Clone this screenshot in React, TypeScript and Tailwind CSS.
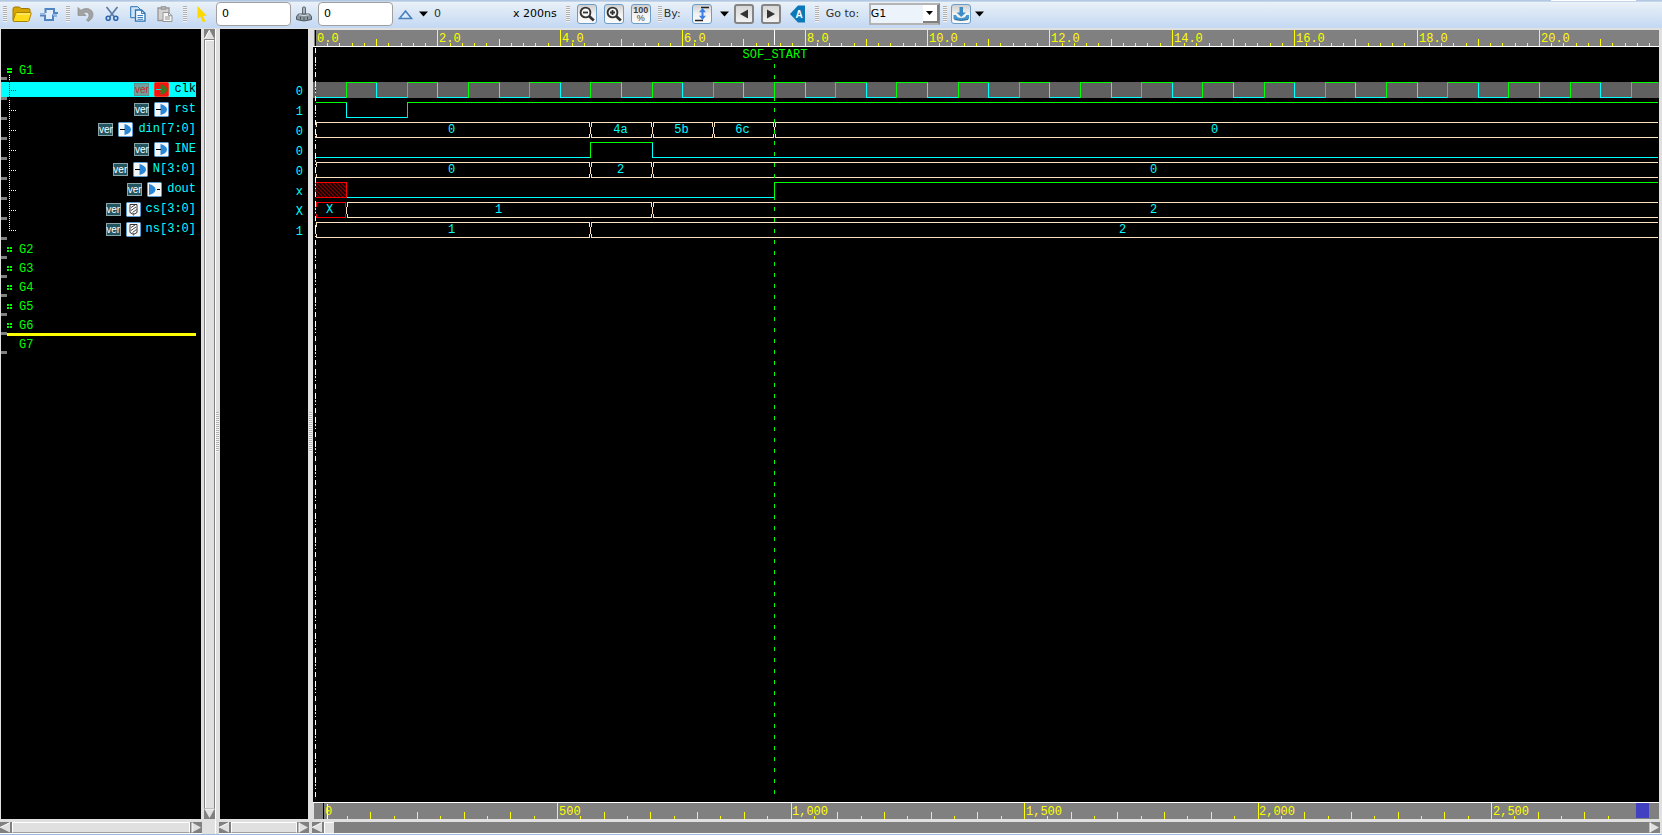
import { useLayoutEffect, useRef, useState, type ReactNode } from "react";

const UNIT = 61.2;
const CYAN = "#00ffff";
const GREEN = "#00ff00";
const YELLOW = "#ffff00";
const BUS = "#ffe4c4";

type IconKind = "input" | "output" | "register";
type Segment = { from: number; value: string };
type Signal = {
  name: string;
  value: string;
  icon: IconKind;
  kind: "bit" | "bus";
  selected?: boolean;
  segments: Segment[];
};

const clock: Segment[] = Array.from({ length: 80 }, (_, i) => ({
  from: i * 0.5,
  value: i % 2 ? "1" : "0",
}));

const signals: Signal[] = [
  { name: "clk", value: "0", icon: "input", kind: "bit", selected: true, segments: clock },
  {
    name: "rst", value: "1", icon: "input", kind: "bit",
    segments: [{ from: 0, value: "1" }, { from: 0.5, value: "0" }, { from: 1.5, value: "1" }],
  },
  {
    name: "din[7:0]", value: "0", icon: "input", kind: "bus",
    segments: [
      { from: 0, value: "0" }, { from: 4.5, value: "4a" }, { from: 5.5, value: "5b" },
      { from: 6.5, value: "6c" }, { from: 7.5, value: "0" },
    ],
  },
  {
    name: "INE", value: "0", icon: "input", kind: "bit",
    segments: [{ from: 0, value: "0" }, { from: 4.5, value: "1" }, { from: 5.5, value: "0" }],
  },
  {
    name: "N[3:0]", value: "0", icon: "input", kind: "bus",
    segments: [{ from: 0, value: "0" }, { from: 4.5, value: "2" }, { from: 5.5, value: "0" }],
  },
  {
    name: "dout", value: "x", icon: "output", kind: "bit",
    segments: [{ from: 0, value: "x" }, { from: 0.5, value: "0" }, { from: 7.5, value: "1" }],
  },
  {
    name: "cs[3:0]", value: "X", icon: "register", kind: "bus",
    segments: [{ from: 0, value: "X" }, { from: 0.5, value: "1" }, { from: 5.5, value: "2" }],
  },
  {
    name: "ns[3:0]", value: "1", icon: "register", kind: "bus",
    segments: [{ from: 0, value: "1" }, { from: 4.5, value: "2" }],
  },
];

function useSize<T extends Element>(initialWidth: number, initialHeight: number) {
  const ref = useRef<T>(null);
  const [size, setSize] = useState({ width: initialWidth, height: initialHeight });
  useLayoutEffect(() => {
    const el = ref.current;
    if (!el) return;
    const measure = () => {
      const box = el.getBoundingClientRect();
      setSize({ width: Math.round(box.width), height: Math.round(box.height) });
    };
    measure();
    const observer = new ResizeObserver(measure);
    observer.observe(el);
    return () => observer.disconnect();
  }, []);
  return { ref, ...size };
}

/* ---------- toolbar ---------- */

function Grip() {
  return (
    <span className="h-4 w-1 shrink-0 bg-[repeating-linear-gradient(to_bottom,#b0b0b0_0_1px,#f4f4f4_1px_2px)]" />
  );
}

function PlainButton({ label, children }: { label: string; children: ReactNode }) {
  return (
    <button type="button" aria-label={label} className="flex h-5 shrink-0 items-center justify-center">
      {children}
    </button>
  );
}

function BoxButton({ label, gray, children }: { label: string; gray?: boolean; children: ReactNode }) {
  return (
    <button
      type="button"
      aria-label={label}
      className={
        gray
          ? "flex h-5 w-5 shrink-0 items-center justify-center rounded-[3px] border-2 border-[#858585] bg-linear-to-b from-[#d8d8d8] to-[#f2f2f2]"
          : "flex h-5 w-5 shrink-0 items-center justify-center rounded-[3px] border border-[#6c9cc8] bg-linear-to-b from-[#d0d0d0] via-[#f2f2f2] to-[#fafafa]"
      }
    >
      {children}
    </button>
  );
}

function Caret() {
  return (
    <svg width="9" height="6" viewBox="0 0 9 6" className="shrink-0">
      <path d="M0 0.5h9L4.5 5.5z" fill="#000" />
    </svg>
  );
}

function FolderIcon() {
  return (
    <svg width="20" height="17" viewBox="0 0 20 17">
      <path d="M1 14V3Q1 1 3 1h4.500L9 2.500h7.500Q18 2.500 18 4v3L15 15H2Q1 15 1 14z" fill="#d8a600" stroke="#a07a00" />
      <path d="M1.200 14.500L3.500 7.500Q4 6.500 5 6.500h13.500q1 0 .7 1l-2.200 7q-.4 1-1.500 1H2q-1 0-.8-1z" fill="#ffdb1c" stroke="#a88400" />
      <path d="M5 8h13" stroke="#fff0a0" />
    </svg>
  );
}

function PulseIcon() {
  return (
    <svg width="18" height="16" viewBox="0 0 18 16" fill="none">
      <path d="M0 9.500h5V13h8V9.500h5v-3h-4.500V3h-8v3.500H0z" fill="#e4eefa" />
      <path d="M5.500 7V3h8.500v4H18" stroke="#4f86c2" strokeWidth="2" />
      <path d="M0 9.500h5V14h8V9.500h4" stroke="#4f86c2" strokeWidth="2" />
      <path d="M0 7.500h5M13 9.500h4" stroke="#8db4de" />
    </svg>
  );
}

function UndoIcon() {
  return (
    <svg width="17" height="16" viewBox="0 0 17 16">
      <path d="M1 1.500v8h8L6.300 6.800C10 5.200 12.500 7 12 10c-.2 1.600-1.200 2.800-2.500 4l1.500 1.500c3-1.500 5-4 5-7C16 3.500 10 .5 3.800 4.300z" fill="#a2a2a2" stroke="#8c8c8c" strokeWidth="0.700" />
    </svg>
  );
}

function CutIcon() {
  return (
    <svg width="14" height="16" viewBox="0 0 14 16" fill="none">
      <path d="M1.500 1l7.500 9.500M12.500 1L5 10.500" stroke="#5a7ca8" strokeWidth="1.700" />
      <circle cx="3.200" cy="12.300" r="2" stroke="#2e66ae" strokeWidth="1.600" />
      <circle cx="10.800" cy="12.300" r="2" stroke="#2e66ae" strokeWidth="1.600" />
    </svg>
  );
}

function CopyIcon() {
  return (
    <svg width="16" height="16" viewBox="0 0 16 16" stroke="#2d74b5">
      <path d="M.7 .7h7l2.500 2.500v8.500H.7z" fill="#cfe3f6" />
      <path d="M5.500 4h6l3.500 3.200v8H5.500z" fill="#f2f8ff" strokeWidth="1.300" />
      <path d="M11.500 4v3.500H15M7.500 9.500h5.500M7.500 11.500h5.500M7.500 13.300h5.500" fill="none" strokeWidth="0.900" />
    </svg>
  );
}

function PasteIcon() {
  return (
    <svg width="16" height="16" viewBox="0 0 16 16" stroke="#969696">
      <path d="M1 2h11v12.500H1z" fill="#d2d2d2" strokeWidth="1.300" />
      <path d="M4 .7h5v2.600H4z" fill="#b4b4b4" />
      <path d="M6 6.500h5.500l3.500 3v6H6z" fill="#f5f5f5" />
      <path d="M11.500 6.500v3.200H15M8 11h5M8 13h5" fill="none" />
    </svg>
  );
}

function PointerIcon() {
  return (
    <svg width="10" height="17" viewBox="0 0 10 17">
      <path d="M.5 0v13l2.800-2.500L6 16.500l2.500-1.200L6 9.700h3.800z" fill="#ffd800" />
    </svg>
  );
}

function StampIcon() {
  return (
    <svg width="16" height="16" viewBox="0 0 16 16">
      <path d="M6.500 1.500q1.500-1.500 3 0v7h-3z" fill="#aab4bc" stroke="#5f6a72" />
      <path d="M2.500 8h11l2 2.500v3q-7.500 3-15 0v-3z" fill="#8b979f" stroke="#505a62" />
      <path d="M3 8.800q5 1.500 10 0" stroke="#d5dde2" fill="none" />
      <path d="M4.500 10.500v3M8 11v3M11.500 10.500v3" stroke="#4f5961" />
    </svg>
  );
}

function DeltaIcon() {
  return (
    <svg width="15" height="11" viewBox="0 0 15 11">
      <path d="M1.500 9.500L7.500 2l6 7.500z" fill="#dcebfa" stroke="#4a80bd" strokeWidth="1.600" />
    </svg>
  );
}

function ZoomIcon({ plus }: { plus?: boolean }) {
  return (
    <svg width="16" height="16" viewBox="0 0 16 16" fill="none" stroke="#333">
      <circle cx="6.500" cy="6.500" r="4.900" strokeWidth="1.900" fill="#f7f7f7" />
      <path d={plus ? "M4 6.500h5M6.500 4v5" : "M4 6.500h5"} strokeWidth="1.800" />
      <path d="M10 10l4.800 4.500" strokeWidth="2.800" />
    </svg>
  );
}

function EdgeIcon() {
  return (
    <svg width="18" height="18" viewBox="0 0 18 18">
      <path d="M8 2.500h8M2 15.500h8" stroke="#222" strokeWidth="1.600" />
      <path d="M9.500 3l3.500 4.200h-2.500v3.600H13L9.500 15 6 10.800h2.500V7.200H6z" fill="#3a80e8" />
    </svg>
  );
}

function StampDownIcon() {
  return (
    <svg width="18" height="18" viewBox="0 0 18 18">
      <path d="M7.500 2h3.500v5.500h3L9.200 12 4.500 7.500h3z" fill="#3c8cc8" />
      <path d="M1.500 10h2.500q1 3 5.200 3t5.200-3H17v4q-7.700 3-15.500 0z" fill="#4a96cc" />
      <path d="M2.500 14.500q6.500 1.800 13.500 0" stroke="#2b6c9f" fill="none" />
    </svg>
  );
}

function Toolbar() {
  return (
    <header className="shrink-0 font-['DejaVu_Sans',sans-serif] text-[11px] leading-4 text-[#303030]">
      <div className="flex h-px justify-end bg-[#b4c8e2] pr-[26px]">
        <span className="w-[85px] bg-white" />
      </div>
      <div className="flex h-[27px] items-center overflow-hidden border-t border-[#c4d6ec] bg-linear-to-b from-[#eaf1f8] to-[#c3d8f3] pb-[2px] pl-[3px]">
        <div className="flex items-center gap-[5px]">
          <Grip />
          <div className="flex gap-2">
            <PlainButton label="Open"><FolderIcon /></PlainButton>
            <PlainButton label="Get signals"><PulseIcon /></PlainButton>
          </div>
        </div>
        <div className="ml-2 flex items-center gap-[7px]">
          <Grip />
          <div className="flex gap-[11px]">
            <PlainButton label="Undo"><UndoIcon /></PlainButton>
            <PlainButton label="Cut"><CutIcon /></PlainButton>
            <PlainButton label="Copy"><CopyIcon /></PlainButton>
            <PlainButton label="Paste"><PasteIcon /></PlainButton>
          </div>
        </div>
        <div className="ml-[10px] flex items-center gap-[10px]">
          <Grip />
          <PlainButton label="Cursor"><PointerIcon /></PlainButton>
        </div>
        <div className="ml-[9px] flex items-center gap-[5px]">
          <input aria-label="Cursor time" defaultValue="0" className="h-6 w-[75px] rounded-[4px] border border-[#a0a0a0] bg-white px-[5px] pb-px text-black" />
          <StampIcon />
          <input aria-label="Marker time" defaultValue="0" className="ml-px h-6 w-[75px] rounded-[4px] border border-[#a0a0a0] bg-white px-[5px] pb-px text-black" />
        </div>
        <div className="ml-[5px] flex items-center gap-[6px]">
          <button type="button" aria-label="Delta" className="flex items-center gap-[6px]">
            <DeltaIcon />
            <Caret />
          </button>
          <span className="w-[73px]">0</span>
          <span className="whitespace-nowrap text-black">x 200ns</span>
        </div>
        <div className="ml-[9px] flex items-center gap-[7px]">
          <Grip />
          <BoxButton label="Zoom out"><ZoomIcon /></BoxButton>
          <BoxButton label="Zoom in"><ZoomIcon plus /></BoxButton>
          <BoxButton label="Zoom 100%">
            <span className="flex flex-col items-center font-['Liberation_Sans',sans-serif] text-[9px] leading-[8px] font-bold text-[#404040]">
              <span>100</span>
              <span className="font-normal">%</span>
            </span>
          </BoxButton>
        </div>
        <div className="ml-[7px] flex items-center">
          <Grip />
          <span className="ml-[2px] w-7">By:</span>
          <BoxButton label="Any change"><EdgeIcon /></BoxButton>
          <button type="button" aria-label="Search kind" className="mr-[5px] ml-2"><Caret /></button>
          <div className="flex gap-[7px]">
            <BoxButton label="Search backward" gray>
              <svg width="10" height="10" viewBox="0 0 10 10"><path d="M9 0.500v9L1 5z" fill="#333" /></svg>
            </BoxButton>
            <BoxButton label="Search forward" gray>
              <svg width="10" height="10" viewBox="0 0 10 10"><path d="M1 0.500v9L9 5z" fill="#333" /></svg>
            </BoxButton>
          </div>
          <button type="button" aria-label="Annotate" className="ml-[9px]">
            <svg width="15" height="18" viewBox="0 0 15 18">
              <path d="M0 9L8 .5h7v17H8z" fill="#0c78b8" />
              <text x="9" y="13" textAnchor="middle" fontSize="10" fontWeight="700" fontFamily="Liberation Sans, sans-serif" fill="#fff">A</text>
            </svg>
          </button>
        </div>
        <div className="ml-[10px] flex items-center">
          <Grip />
          <label htmlFor="group" className="ml-[7px] w-[43px] whitespace-nowrap">Go to:</label>
          <span className="relative flex">
            <select id="group" defaultValue="G1" className="h-[22px] w-[71px] appearance-none border-2 border-[#b4b4b4] border-r-[#8c8c8c] bg-[#edf3fa] text-black">
              {["G1", "G2", "G3", "G4", "G5", "G6", "G7"].map((g) => <option key={g}>{g}</option>)}
            </select>
            <span className="pointer-events-none absolute inset-y-[2px] right-px flex w-4 items-center justify-center border-r-2 border-b-2 border-[#808080] bg-white">
              <svg width="7" height="4" viewBox="0 0 7 4"><path d="M0 0h7L3.500 4z" fill="#000" /></svg>
            </span>
          </span>
        </div>
        <div className="ml-[3px] flex items-center gap-1">
          <Grip />
          <BoxButton label="Place marker"><StampDownIcon /></BoxButton>
          <button type="button" aria-label="Marker options"><Caret /></button>
        </div>
      </div>
    </header>
  );
}

/* ---------- scroll bars and splitters ---------- */

const ARROWS = {
  left: { fill: "M10 .5v10L0 5.500z", light: "M10 .5L0 5.500" },
  right: { fill: "M1 .5v10L10 5.500z", light: "M1 10.500V.5" },
  up: { fill: "M.5 10L5.500 1l5 9z", light: "M.5 10L5.500 1" },
  down: { fill: "M.5 1h10L5.500 10z", light: "M10.500 1H.5" },
};

function ArrowButton({ dir }: { dir: keyof typeof ARROWS }) {
  const arrow = ARROWS[dir];
  return (
    <button type="button" aria-label={`Scroll ${dir}`} className="h-[11px] w-[11px] shrink-0">
      <svg width="11" height="11" viewBox="0 0 11 11" className="block">
        <path d={arrow.fill} fill="#e0e0e0" />
        <path d={arrow.light} stroke="#fff" fill="none" />
      </svg>
    </button>
  );
}

function HScroll({ short }: { short?: boolean }) {
  return (
    <div className="mt-[3px] flex h-3 shrink-0 gap-px border-b border-white bg-[#808080]">
      <ArrowButton dir="left" />
      <span
        className={
          short
            ? "w-[10px] border-t border-l border-white bg-[#e0e0e0]"
            : "flex-1 border border-white border-b-[#a0a0a0] bg-[#e0e0e0]"
        }
      />
      {short && <span className="flex-1" />}
      <ArrowButton dir="right" />
    </div>
  );
}

function SplitGrip() {
  return (
    <span className="h-10 w-[3px] bg-[repeating-linear-gradient(to_bottom,#b0b0b0_0_1px,#f4f4f4_1px_2px)]" />
  );
}

/* ---------- signal tree ---------- */

function dots(count: number, at: (i: number) => [number, number], color: string) {
  return Array.from({ length: count }, (_, i) => {
    const [x, y] = at(i);
    return <rect key={`${x}-${y}`} x={x} y={y} width="1" height="1" fill={color} />;
  });
}

function PortIcon({ kind, selected }: { kind: IconKind; selected?: boolean }) {
  const border = selected ? "#f04030" : "#5a9ad0";
  return (
    <svg width="15" height="15" viewBox="0 0 15 15" className="shrink-0">
      <rect x="0.5" y="0.5" width="14" height="14" rx="1" fill={selected ? "#ff1010" : "#f4f6f8"} stroke={border} />
      {kind === "input" && (
        <>
          <path d="M6.500 2Q13 4 13 7.500T6.500 13z" fill={selected ? "#3c7820" : "#2b86d8"} />
          <path d="M2 7.500h5" stroke={selected ? "#00e0e0" : "#000"} />
        </>
      )}
      {kind === "output" && (
        <>
          <path d="M2 2q6.500 2 6.500 5.500T2 13z" fill="#2b86d8" />
          <path d="M10 7.500h3" stroke="#000" />
        </>
      )}
      {kind === "register" && (
        <>
          <path d="M4 2.500h7v8l-3.500 2L4 10.500z" fill="#fff" stroke="#333" />
          <path d="M5 5.500l4-2.500M5 8.500l5-3.500M6.500 10.500l4-3" stroke="#444" />
          <path d="M7.500 11v2.500" stroke="#2b76b8" />
        </>
      )}
    </svg>
  );
}

function SignalRow({ signal, last }: { signal: Signal; last: boolean }) {
  const dot = signal.selected ? "#c00000" : "#fff";
  return (
    <li className="flex h-5 items-start">
      <div className={signal.selected ? "mt-[2px] flex h-[15px] w-full items-center bg-[#00ffff] text-black" : "mt-[2px] flex h-[15px] w-full items-center text-[#00ffff]"}>
        <svg width="18" height="20" viewBox="0 0 18 20" className="-mt-[2px] -mb-[3px] shrink-0">
          <rect x="0" y="17" width="6" height="3" fill="#808080" />
          {dots(last ? 6 : 10, (i) => [8, i * 2], dot)}
          {dots(3, (i) => [10 + i * 2, 10], dot)}
        </svg>
        <div className="flex flex-1 items-center justify-end gap-[5px]">
          <span
            className={
              signal.selected
                ? "flex h-[13px] w-[15px] items-center justify-center border border-[#609090] bg-[#70a09c] font-['Liberation_Sans',sans-serif] text-[10px] leading-[11px] text-[#c82828]"
                : "flex h-[13px] w-[15px] items-center justify-center border border-[#88a4a8] bg-[#225560] font-['Liberation_Sans',sans-serif] text-[10px] leading-[11px] text-white"
            }
          >
            ver
          </span>
          <PortIcon kind={signal.icon} selected={signal.selected} />
          <span className="leading-[17px]">{signal.name}</span>
        </div>
      </div>
    </li>
  );
}

function GroupRow({ name, open, insertBelow, bare }: { name: string; open?: boolean; insertBelow?: boolean; bare?: boolean }) {
  return (
    <li className={open ? "relative flex h-5 items-center text-[#00ff00]" : "relative flex h-[19px] items-center text-[#00ff00]"}>
      <svg width="18" height="20" viewBox="0 0 18 20" className="shrink-0 self-start">
        <rect x="0" y={open ? 17 : 16} width="6" height="3" fill="#808080" />
        {open && <path d="M6 8h5v2H6zM6 11h5v2H6z" fill={GREEN} />}
        {open && dots(3, (i) => [8, 15 + i * 2], "#fff")}
        {!open && !bare && <path d="M6 7h2v2H6zM9 7h2v2H9zM6 10h2v2H6zM9 10h2v2H9z" fill={GREEN} />}
      </svg>
      <span className="pt-[2px]">{name}</span>
      {insertBelow && <span className="absolute inset-x-0 -bottom-px left-[6px] h-[3px] bg-[#ffff00]" />}
    </li>
  );
}

function SignalTree() {
  return (
    <section className="ml-px flex-1 overflow-hidden bg-black pt-[31px] pr-[5px]">
      <ul>
        <GroupRow name="G1" open />
        {signals.map((s, i) => <SignalRow key={s.name} signal={s} last={i === signals.length - 1} />)}
        <GroupRow name="G2" />
        <GroupRow name="G3" />
        <GroupRow name="G4" />
        <GroupRow name="G5" />
        <GroupRow name="G6" insertBelow />
        <GroupRow name="G7" bare />
      </ul>
    </section>
  );
}

/* ---------- waveform pane ---------- */

const MONO = "'Liberation Mono', monospace";

function TopRuler() {
  const { ref, width } = useSize<SVGSVGElement>(1345, 16);
  const ticks = Array.from({ length: Math.floor((width - 4) / (UNIT / 5)) + 1 }, (_, i) => i);
  return (
    <svg ref={ref} className="block h-4 w-full bg-[#808080]" fontFamily={MONO} fontSize="12">
      {ticks.map((i) => {
        const x = 1 + Math.round((i * UNIT) / 5);
        const h = i % 10 === 0 ? 16 : i % 5 === 0 ? 7 : 3;
        return <rect key={i} x={x} y={16 - h} width="1" height={h} fill={i === 0 ? "#000" : YELLOW} />;
      })}
      {ticks.filter((i) => i % 10 === 0).map((i) => (
        <text key={i} x={3 + Math.round((i * UNIT) / 5)} y="12" fill={YELLOW}>{(i / 5).toFixed(1)}</text>
      ))}
      <rect x={1 + Math.round(7.5 * UNIT)} y="0" width="1" height="15" fill="#fff" />
    </svg>
  );
}

function OverviewRuler() {
  const { ref, width } = useSize<SVGSVGElement>(1345, 16);
  const step = 23.35;
  const ticks = Array.from({ length: Math.floor((width - 40) / step) + 1 }, (_, i) => i);
  return (
    <svg ref={ref} className="block h-4 w-full bg-[#808080]" fontFamily={MONO} fontSize="12">
      {ticks.slice(1).map((i) => {
        const h = i % 10 === 0 ? 16 : i % 2 === 0 ? 7 : 3;
        return <rect key={i} x={Math.round(9.5 + i * step)} y={16 - h} width="1" height={h} fill={YELLOW} />;
      })}
      <rect x="9" y="0" width="1" height="16" fill="#000" />
      <rect x="13" y="1" width="1" height="15" fill="#fff" />
      {ticks.filter((i) => i % 10 === 0).map((i) => (
        <text key={i} x={Math.round(11 + i * step)} y="12" fill={YELLOW}>{(i * 50).toLocaleString("en-US")}</text>
      ))}
      <rect x={width - 23} y="0" width="13" height="15" fill="#4040c0" />
    </svg>
  );
}

function BitWave({ signal, top, end }: { signal: Signal; top: number; end: number }) {
  const bottom = top + 15;
  const at = (t: number) => 2 + Math.round(t * UNIT);
  const visible = signal.segments.filter((s) => at(s.from) < end);
  return (
    <g>
      {visible.map((s, i) => {
        const x1 = at(s.from);
        const x2 = i + 1 < visible.length ? at(visible[i + 1].from) : end;
        if (s.value === "x") {
          return <rect key={i} x={x1} y={top} width={x2 - x1} height="15" fill="url(#hatch)" stroke="#ff0000" />;
        }
        const y = s.value === "1" ? top : bottom;
        const color = s.value === "1" ? GREEN : CYAN;
        const edge = i > 0 && visible[i - 1].value !== "x";
        return <path key={i} d={edge ? `M${x1} ${s.value === "1" ? bottom : top}V${y}H${x2}` : `M${x1} ${y}H${x2}`} stroke={color} fill="none" />;
      })}
    </g>
  );
}

function BusWave({ signal, top, end }: { signal: Signal; top: number; end: number }) {
  const bottom = top + 15;
  const at = (t: number) => 2 + Math.round(t * UNIT);
  return (
    <g>
      {signal.segments.map((s, i) => {
        const x1 = at(s.from);
        const open = i + 1 === signal.segments.length;
        const x2 = open ? end : at(signal.segments[i + 1].from);
        const color = s.value === "X" ? "#ff0000" : BUS;
        const a = x1 + 1;
        const b = open ? x2 : x2 - 1;
        const d = open
          ? `M${b} ${top}H${a}V${top + 4}M${a} ${bottom - 4}V${bottom}H${b}`
          : `M${a} ${top + 4}V${top}H${b}V${top + 4}M${a} ${bottom - 4}V${bottom}H${b}V${bottom - 4}`;
        return (
          <g key={i}>
            <path d={d} stroke={color} fill="none" />
            <path d={`M${x1} ${top + 4}V${bottom - 4}`} stroke={color} />
            <text x={Math.floor((x1 + x2) / 2) - 1} y={bottom - 5} textAnchor="middle" fill={CYAN}>{s.value}</text>
          </g>
        );
      })}
    </g>
  );
}

function WavePlot() {
  const { ref, width, height } = useSize<SVGSVGElement>(1346, 755);
  const end = width - 2;
  const marker = 2 + Math.round(7.5 * UNIT);
  return (
    <svg ref={ref} className="block min-h-0 w-full flex-1 bg-black" fontFamily={MONO} fontSize="12">
      <defs>
        <pattern id="hatch" width="4" height="4" patternUnits="userSpaceOnUse">
          <path d="M0 0h1v1h-1zM1 1h1v1h-1zM2 2h1v1h-1zM3 3h1v1h-1z" fill="#ff0000" />
        </pattern>
        <pattern id="cursor" width="2" height="24" patternUnits="userSpaceOnUse" patternTransform="translate(0 1)">
          <path d="M0 0h2v5h-2zM0 9h2v6h-2zM0 20h2v1h-2z" fill="#fff" />
          <path d="M0 5h2v4h-2zM0 18h2v1h-2z" fill="#0000ff" />
          <path d="M0 16h2v2h-2z" fill="#ffff00" />
        </pattern>
      </defs>
      <rect x="0" y="35" width={width} height="16" fill="#606060" />
      <g transform="translate(0.5 0.5)" shapeRendering="crispEdges">
        {signals.map((s, i) =>
          s.kind === "bit"
            ? <BitWave key={s.name} signal={s} top={35 + i * 20} end={end} />
            : <BusWave key={s.name} signal={s} top={35 + i * 20} end={end} />
        )}
        <path d={`M${marker} 16.500V${height - 6}`} stroke={GREEN} strokeDasharray="4 7" />
      </g>
      <rect x="2" y="0" width="1" height={height - 2} fill="url(#cursor)" />
      <text x={marker + 1} y="11" textAnchor="middle" fill={GREEN}>SOF_START</text>
    </svg>
  );
}

export default function App() {
  return (
    <div className="flex h-screen flex-col overflow-hidden bg-[#e0e0e0]">
      <Toolbar />
      <main className="flex min-h-0 flex-1 border-b border-[#9ab8e0] pt-px pr-[2px] font-['Liberation_Mono',monospace] text-[12px] leading-[15px] text-[#00ffff]">
        <div className="flex w-[215px] shrink-0 flex-col">
          <div className="flex min-h-0 flex-1">
            <SignalTree />
            <div className="ml-[3px] flex w-[11px] flex-col bg-[#808080]">
              <ArrowButton dir="up" />
              <span className="mx-px flex-1 border-t border-l border-white bg-[#e0e0e0]" />
              <ArrowButton dir="down" />
            </div>
          </div>
          <div className="mr-[13px]"><HScroll /></div>
        </div>
        <div className="flex w-1 shrink-0 items-center justify-end border-l border-white"><SplitGrip /></div>
        <div className="flex w-[90px] shrink-0 flex-col">
          <ul className="mx-px min-h-0 flex-1 bg-black pt-[53px] pr-[5px] text-right">
            {signals.map((s) => <li key={s.name} className="h-5 leading-5">{s.value}</li>)}
          </ul>
          <HScroll />
        </div>
        <div className="flex w-[3px] shrink-0 items-center"><SplitGrip /></div>
        <div className="flex min-w-0 flex-1 flex-col">
          <div className="mx-px flex min-h-0 flex-1 flex-col pt-px">
            <div className="border-b border-white pl-px"><TopRuler /></div>
            <WavePlot />
            <div className="border-t border-white pl-px"><OverviewRuler /></div>
          </div>
          <HScroll short />
        </div>
      </main>
    </div>
  );
}
